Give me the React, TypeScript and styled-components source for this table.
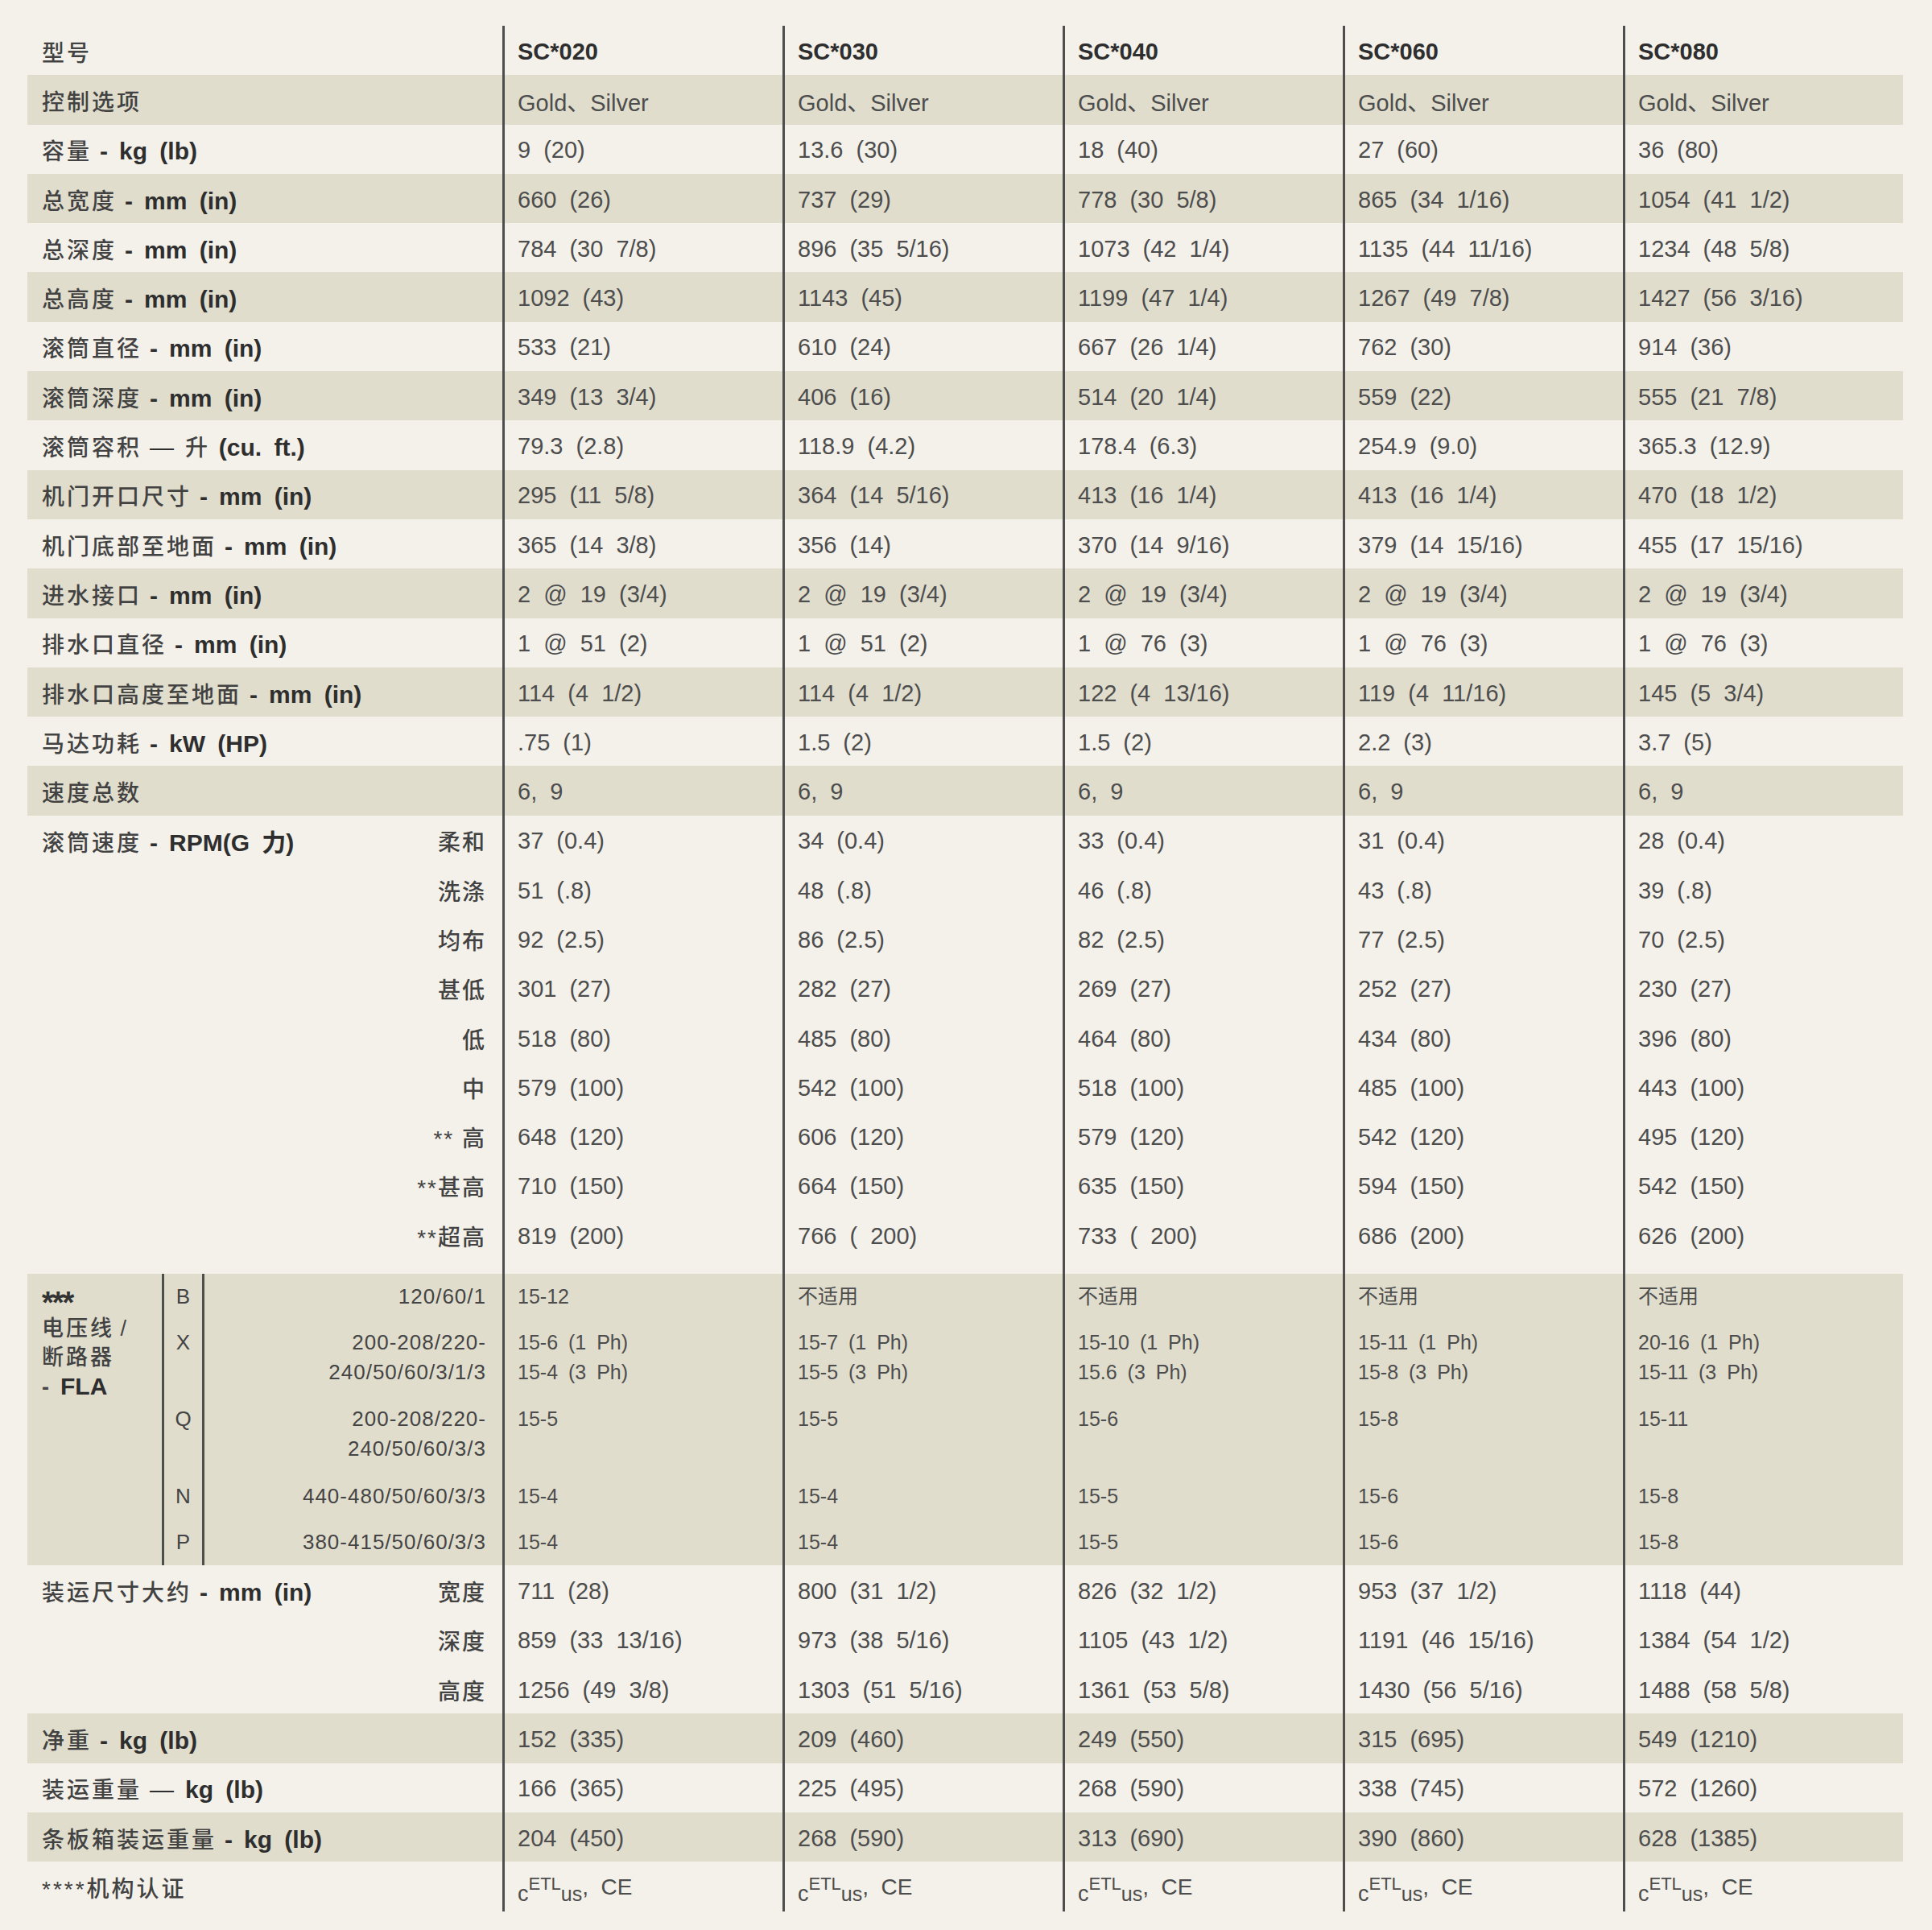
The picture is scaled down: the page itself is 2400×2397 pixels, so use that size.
import React, { FC, ReactNode } from 'react'
import styled, { createGlobalStyle } from 'styled-components'

const GlobalStyle = createGlobalStyle`
  html, body {
    margin: 0;
    padding: 0;
    background: #f3f1ea;
  }
`

const Page = styled.div`
  padding: 32px 0 24px 34px;
  font-family: 'Liberation Sans', 'Noto Sans CJK SC', sans-serif;
  color: #444;
`

const Table = styled.div`
  display: flex;
  flex-direction: column;
  width: 2330px;
`

const Row = styled.div<{ $striped?: boolean; $h?: number }>`
  display: grid;
  grid-template-columns: 590px repeat(5, 348px);
  height: ${(p) => p.$h ?? 61.3}px;
  background: ${(p) => (p.$striped ? '#e0ddcd' : 'transparent')};
`

const LabelCell = styled.div`
  display: flex;
  align-items: center;
  justify-content: space-between;
  padding: 2px 20px 0 18px;
  font-size: 28px;
  white-space: nowrap;
`

const SubLabel = styled.span`
  font-size: 28px;
  font-weight: 500;
  letter-spacing: 2px;
  color: #424242;
`

const Cell = styled.div<{ $head?: boolean }>`
  display: flex;
  align-items: center;
  padding: 3px 0 0 16px;
  border-left: 3px solid #4e4e4e;
  font-size: 29px;
  word-spacing: 8px;
  white-space: nowrap;
  font-weight: ${(p) => (p.$head ? 700 : 400)};
  color: ${(p) => (p.$head ? '#2e2e2e' : '#4d4d4d')};
`

const Zh = styled.span`
  letter-spacing: 3px;
  font-weight: 500;
  color: #424242;
`

const Unit = styled.b`
  font-size: 30px;
  font-weight: 700;
  color: #2e2e2e;
  word-spacing: 7px;
`

const Sep = styled.span<{ $bold?: boolean }>`
  margin: 0 14px 0 10px;
  font-size: 30px;
  font-weight: ${(p) => (p.$bold ? 700 : 400)};
  color: #2e2e2e;
`

/* voltage / breaker block */
const Volt = styled.div`
  display: grid;
  grid-template-columns: 167px 53px 370px repeat(5, 348px);
  background: #e0ddcd;
`

const VoltLabel = styled.div`
  grid-row: 1 / span 5;
  padding: 14px 0 0 18px;
  font-size: 27px;
  line-height: 36px;
  color: #444;
`

const Stars = styled.div`
  font-size: 38px;
  font-weight: 700;
  letter-spacing: -2px;
  color: #333;
  height: 36px;
  line-height: 44px;
`

const FlaDash = styled.span`
  margin-right: 14px;
  font-weight: 700;
`

const VCell = styled.div<{ $h: number; $line?: boolean; $right?: boolean; $center?: boolean }>`
  height: ${(p) => p.$h}px;
  box-sizing: border-box;
  padding: 10px ${(p) => (p.$right ? 20 : 0)}px 0 ${(p) => (p.$line ? 16 : 0)}px;
  border-left: 3px solid #4e4e4e;
  font-size: 25px;
  line-height: 37px;
  text-align: ${(p) => (p.$right ? 'right' : p.$center ? 'center' : 'left')};
  color: #4d4d4d;
  word-spacing: 6px;
  white-space: nowrap;
`

const VoltCell = styled(VCell)`
  border-left: none;
  font-size: 26px;
  letter-spacing: 1px;
  color: #444;
`

const LetterCell = styled(VCell)`
  border-right: 3px solid #4e4e4e;
  padding-left: 0;
  font-size: 26px;
  color: #444;
`

const Mark = styled.span`
  display: inline-flex;
  align-items: baseline;
  font-size: 28px;
  color: #4d4d4d;
`

const MarkPart = styled.span<{ $size: number; $shift: number }>`
  font-size: ${(p) => p.$size}px;
  position: relative;
  top: ${(p) => p.$shift}px;
  word-spacing: 0;
`

const Lbl = (zh: string, unit?: string, sep: string = '-', sepBold = true): ReactNode => (
  <span>
    <Zh>{zh}</Zh>
    {unit && (
      <>
        <Sep $bold={sepBold}>{sep}</Sep>
        <Unit>{unit}</Unit>
      </>
    )}
  </span>
)

type Line = { label?: ReactNode; sub?: string; values: string[]; striped?: boolean; head?: boolean }

const top: Line[] = [
  { label: <Zh>型号</Zh>, values: ['SC*020', 'SC*030', 'SC*040', 'SC*060', 'SC*080'], head: true },
  { label: Lbl('控制选项'), values: Array(5).fill('Gold、Silver'), striped: true },
  { label: Lbl('容量', 'kg (lb)'), values: ['9 (20)', '13.6 (30)', '18 (40)', '27 (60)', '36 (80)'] },
  { label: Lbl('总宽度', 'mm (in)'), values: ['660 (26)', '737 (29)', '778 (30 5/8)', '865 (34 1/16)', '1054 (41 1/2)'], striped: true },
  { label: Lbl('总深度', 'mm (in)'), values: ['784 (30 7/8)', '896 (35 5/16)', '1073 (42 1/4)', '1135 (44 11/16)', '1234 (48 5/8)'] },
  { label: Lbl('总高度', 'mm (in)'), values: ['1092 (43)', '1143 (45)', '1199 (47 1/4)', '1267 (49 7/8)', '1427 (56 3/16)'], striped: true },
  { label: Lbl('滚筒直径', 'mm (in)'), values: ['533 (21)', '610 (24)', '667 (26 1/4)', '762 (30)', '914 (36)'] },
  { label: Lbl('滚筒深度', 'mm (in)'), values: ['349 (13 3/4)', '406 (16)', '514 (20 1/4)', '559 (22)', '555 (21 7/8)'], striped: true },
  {
    label: (
      <span>
        <Zh>滚筒容积</Zh>
        <Sep>—</Sep>
        <Zh>升 </Zh>
        <Unit>(cu. ft.)</Unit>
      </span>
    ),
    values: ['79.3 (2.8)', '118.9 (4.2)', '178.4 (6.3)', '254.9 (9.0)', '365.3 (12.9)'],
  },
  { label: Lbl('机门开口尺寸', 'mm (in)'), values: ['295 (11 5/8)', '364 (14 5/16)', '413 (16 1/4)', '413 (16 1/4)', '470 (18 1/2)'], striped: true },
  { label: Lbl('机门底部至地面', 'mm (in)'), values: ['365 (14 3/8)', '356 (14)', '370 (14 9/16)', '379 (14 15/16)', '455 (17 15/16)'] },
  { label: Lbl('进水接口', 'mm (in)'), values: Array(5).fill('2 @ 19 (3/4)'), striped: true },
  { label: Lbl('排水口直径', 'mm (in)'), values: ['1 @ 51 (2)', '1 @ 51 (2)', '1 @ 76 (3)', '1 @ 76 (3)', '1 @ 76 (3)'] },
  { label: Lbl('排水口高度至地面', 'mm (in)'), values: ['114 (4 1/2)', '114 (4 1/2)', '122 (4 13/16)', '119 (4 11/16)', '145 (5 3/4)'], striped: true },
  { label: Lbl('马达功耗', 'kW (HP)'), values: ['.75 (1)', '1.5 (2)', '1.5 (2)', '2.2 (3)', '3.7 (5)'] },
  { label: Lbl('速度总数'), values: Array(5).fill('6, 9'), striped: true },
  { label: Lbl('滚筒速度', 'RPM(G 力)'), sub: '柔和', values: ['37 (0.4)', '34 (0.4)', '33 (0.4)', '31 (0.4)', '28 (0.4)'] },
  { sub: '洗涤', values: ['51 (.8)', '48 (.8)', '46 (.8)', '43 (.8)', '39 (.8)'] },
  { sub: '均布', values: ['92 (2.5)', '86 (2.5)', '82 (2.5)', '77 (2.5)', '70 (2.5)'] },
  { sub: '甚低', values: ['301 (27)', '282 (27)', '269 (27)', '252 (27)', '230 (27)'] },
  { sub: '低', values: ['518 (80)', '485 (80)', '464 (80)', '434 (80)', '396 (80)'] },
  { sub: '中', values: ['579 (100)', '542 (100)', '518 (100)', '485 (100)', '443 (100)'] },
  { sub: '** 高', values: ['648 (120)', '606 (120)', '579 (120)', '542 (120)', '495 (120)'] },
  { sub: '**甚高', values: ['710 (150)', '664 (150)', '635 (150)', '594 (150)', '542 (150)'] },
  { sub: '**超高', values: ['819 (200)', '766 ( 200)', '733 ( 200)', '686 (200)', '626 (200)'] },
]

const bottom: Line[] = [
  { label: Lbl('装运尺寸大约', 'mm (in)'), sub: '宽度', values: ['711 (28)', '800 (31 1/2)', '826 (32 1/2)', '953 (37 1/2)', '1118 (44)'] },
  { sub: '深度', values: ['859 (33 13/16)', '973 (38 5/16)', '1105 (43 1/2)', '1191 (46 15/16)', '1384 (54 1/2)'] },
  { sub: '高度', values: ['1256 (49 3/8)', '1303 (51 5/16)', '1361 (53 5/8)', '1430 (56 5/16)', '1488 (58 5/8)'] },
  { label: Lbl('净重', 'kg (lb)'), values: ['152 (335)', '209 (460)', '249 (550)', '315 (695)', '549 (1210)'], striped: true },
  { label: Lbl('装运重量', 'kg (lb)', '—', false), values: ['166 (365)', '225 (495)', '268 (590)', '338 (745)', '572 (1260)'] },
  { label: Lbl('条板箱装运重量', 'kg (lb)'), values: ['204 (450)', '268 (590)', '313 (690)', '390 (860)', '628 (1385)'], striped: true },
]

type VRow = { code: string; volt: string[]; h: number; values: string[][] }

const volt: VRow[] = [
  { code: 'B', volt: ['120/60/1'], h: 57, values: [['15-12'], ['不适用'], ['不适用'], ['不适用'], ['不适用']] },
  {
    code: 'X',
    volt: ['200-208/220-', '240/50/60/3/1/3'],
    h: 95,
    values: [
      ['15-6 (1 Ph)', '15-4 (3 Ph)'],
      ['15-7 (1 Ph)', '15-5 (3 Ph)'],
      ['15-10 (1 Ph)', '15.6 (3 Ph)'],
      ['15-11 (1 Ph)', '15-8 (3 Ph)'],
      ['20-16 (1 Ph)', '15-11 (3 Ph)'],
    ],
  },
  { code: 'Q', volt: ['200-208/220-', '240/50/60/3/3'], h: 96, values: [['15-5'], ['15-5'], ['15-6'], ['15-8'], ['15-11']] },
  { code: 'N', volt: ['440-480/50/60/3/3'], h: 57, values: [['15-4'], ['15-4'], ['15-5'], ['15-6'], ['15-8']] },
  { code: 'P', volt: ['380-415/50/60/3/3'], h: 57, values: [['15-4'], ['15-4'], ['15-5'], ['15-6'], ['15-8']] },
]

const Lines: FC<{ items: string[] }> = ({ items }) => (
  <>
    {items.map((t, i) => (
      <div key={i}>{t}</div>
    ))}
  </>
)

const DataRow: FC<{ line: Line }> = ({ line }) => (
  <Row $striped={line.striped}>
    <LabelCell>
      <span>{line.label}</span>
      {line.sub && <SubLabel>{line.sub}</SubLabel>}
    </LabelCell>
    {line.values.map((v, i) => (
      <Cell key={i} $head={line.head}>
        {v}
      </Cell>
    ))}
  </Row>
)

const EtlMark: FC = () => (
  <Mark>
    <MarkPart $size={27} $shift={8}>c</MarkPart>
    <MarkPart $size={22} $shift={-6}>ETL</MarkPart>
    <MarkPart $size={25} $shift={8}>us</MarkPart>
    <MarkPart $size={28} $shift={0}>,&nbsp;&nbsp;CE</MarkPart>
  </Mark>
)

const App: FC = () => (
  <Page>
    <GlobalStyle />
    <Table>
      {top.map((l, i) => (
        <DataRow key={i} line={l} />
      ))}
      <Row $h={18}>
        <div />
        {[0, 1, 2, 3, 4].map((i) => (
          <Cell key={i} />
        ))}
      </Row>
      <Volt>
        <VoltLabel>
          <Stars>***</Stars>
          <div>
            <Zh>电压线</Zh> /
          </div>
          <Zh>断路器</Zh>
          <div>
            <FlaDash>-</FlaDash>
            <Unit>FLA</Unit>
          </div>
        </VoltLabel>
        {volt.map((r) => (
          <React.Fragment key={r.code}>
            <LetterCell $h={r.h} $center>
              {r.code}
            </LetterCell>
            <VoltCell $h={r.h} $right>
              <Lines items={r.volt} />
            </VoltCell>
            {r.values.map((v, i) => (
              <VCell key={i} $h={r.h} $line>
                <Lines items={v} />
              </VCell>
            ))}
          </React.Fragment>
        ))}
      </Volt>
      {bottom.map((l, i) => (
        <DataRow key={i} line={l} />
      ))}
      <Row>
        <LabelCell>
          <Zh>****机构认证</Zh>
        </LabelCell>
        {[0, 1, 2, 3, 4].map((i) => (
          <Cell key={i}>
            <EtlMark />
          </Cell>
        ))}
      </Row>
    </Table>
  </Page>
)

export default App
